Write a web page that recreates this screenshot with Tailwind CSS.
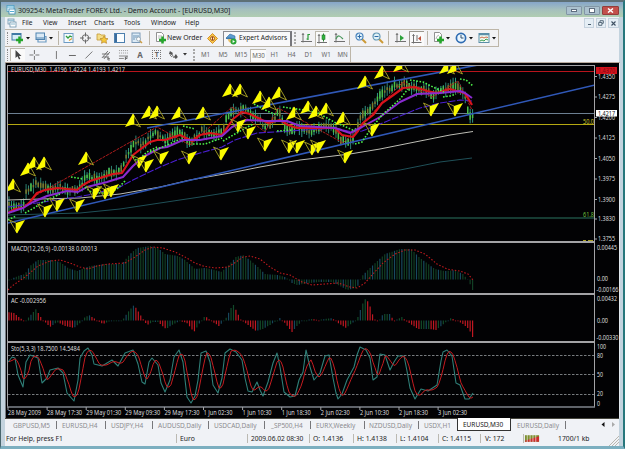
<!DOCTYPE html>
<html lang="en">
<head>
  <meta charset="UTF-8">
  <meta name="viewport" content="width=device-width, initial-scale=1.0">
  <title>309254: MetaTrader FOREX Ltd.</title>
  <script src="https://cdn.jsdelivr.net/npm/@tailwindcss/browser@4"></script>
</head>
<body class="overflow-hidden font-['Noto_Sans',sans-serif] text-[7px] leading-none text-[#1c1c24]">
  <div class="flex flex-col w-[625px] h-[449px] bg-[#c3d3de] border-t-2 border-l border-t-[#5d7076] border-l-[#49666e] border-r-2 border-r-[#27777c] border-b-3 border-b-[#7cafc0] whitespace-nowrap">

    <!-- Title bar -->
    <div class="flex items-center h-[15px] shrink-0 pl-[5px] pr-[4px] bg-linear-to-b from-[#86a6c9] via-[#a5c0bd] to-[#b0cdb1]">
      <svg class="w-[10px] h-[10px]" viewBox="0 0 10 10"><rect x="1" y="0.5" width="7" height="6" fill="#e9f6fb" stroke="#4b9cc3" stroke-width=".8"/><rect x="3" y="4" width="6" height="5" fill="#fff" stroke="#3887b2" stroke-width=".8"/><path d="M1 2h7M4 6.5h4" stroke="#55aed5"/></svg>
      <span class="ml-[2px] mt-[2px] text-[7.1px] w-[215px] tracking-[-0.03px]">309254: MetaTrader FOREX Ltd. - Demo Account - [EURUSD,M30]</span>
      <div class="ml-auto flex gap-[2px] self-start mt-[4px]">
        <div class="flex items-center justify-center w-[16px] h-[9px] bg-[#abc1ce] border border-[#8296a6] rounded-[1px]"><div class="w-[6px] h-[3px] bg-white border border-[#5f6e80]"></div></div>
        <div class="flex items-center justify-center w-[16px] h-[9px] bg-[#abc1ce] border border-[#8296a6] rounded-[1px]"><div class="w-[6px] h-[5px] bg-white border border-[#5f6e80]"></div></div>
        <div class="flex items-center justify-center w-[17px] h-[9px] bg-[#c3504b] border border-[#933d3c] rounded-[1px]"><svg class="w-[7px] h-[5px]" viewBox="0 0 7 5"><path d="M1 .5l5 4M6 .5l-5 4" stroke="#fff" stroke-width="1.5"/></svg></div>
      </div>
    </div>

    <!-- Client area -->
    <div class="flex flex-col grow ml-[4px] mr-[4px] bg-[#f0f2f6]">

      <!-- Menu -->
      <div class="flex items-center h-[12px] shrink-0 text-[7px]">
        <svg class="w-[10px] h-[10px] ml-[2px]" viewBox="0 0 10 10"><rect x="1" y="1" width="6" height="5" fill="#eef7fb" stroke="#7296ad" stroke-width=".8"/><rect x="3" y="4" width="6" height="5" fill="#fff" stroke="#6c93ac" stroke-width=".8"/><path d="M1 2.3h6M4 6h4" stroke="#86b5cd"/></svg>
        <span class="w-[21px] ml-[5px] text-[6.6px]">File</span>
        <span class="w-[25px] text-[6.6px]">View</span>
        <span class="w-[26px] text-[6.6px]">Insert</span>
        <span class="w-[30px] text-[6.6px]">Charts</span>
        <span class="w-[27px] text-[6.6px]">Tools</span>
        <span class="w-[34px] text-[6.6px]">Window</span>
        <span class="text-[6.6px]">Help</span>
        <div class="ml-auto flex gap-[2px]">
          <div class="flex items-end justify-center w-[10px] h-[10px] bg-[#e5eef5] border border-[#c5d2de]"><div class="w-[3px] h-px mb-[2px] bg-[#4b5f71]"></div></div>
          <div class="flex items-center justify-center w-[10px] h-[10px] bg-[#e5eef5] border border-[#c5d2de]"><svg class="w-[6px] h-[6px]" viewBox="0 0 6 6"><path d="M2 2V.7h3.3v2.6H4M.7 2.5h3.2v2.8H.7z" fill="none" stroke="#4b5f71" stroke-width=".9"/></svg></div>
          <div class="flex items-center justify-center w-[11px] h-[10px] bg-[#e5eef5] border border-[#c5d2de]"><svg class="w-[5px] h-[5px]" viewBox="0 0 5 5"><path d="M.5.5l4 4M4.500.500l-4 4" stroke="#3f5163" stroke-width="1.1"/></svg></div>
        </div>
      </div>

      <!-- Standard toolbar -->
      <div class="flex items-center h-[18px] w-[494px] shrink-0 border-t border-r border-b border-[#bdb6a8] bg-[#f2f2f4]">
        <div class="w-px h-[12px] ml-[2px] mr-[3px] border-l border-dotted border-[#8c8c8c]"></div>
        <svg class="w-[13px] h-[12px]" viewBox="0 0 13 12"><rect x="1" y="1.500" width="9" height="6.500" fill="#d6edf8" stroke="#3f7aa5"/><path d="M1 2.500h9" stroke="#3f7aa5"/><path d="M8.500 4.500v7M5 8h7" stroke="#25a52b" stroke-width="2.500"/></svg>
        <svg class="w-[4px] h-[3px] ml-[2px]" viewBox="0 0 4 3"><path d="M0 0h4L2 2.500z" fill="#111"/></svg>
        <svg class="w-[13px] h-[12px] ml-[5px]" viewBox="0 0 13 12"><rect x="1" y="1" width="8.500" height="6.500" fill="#d9e9f6" stroke="#4f83b0"/><path d="M3 8v2h8V4.500h-1" fill="none" stroke="#6c9cc3" stroke-width="1.200"/><path d="M1 6h8" stroke="#4f83b0"/></svg>
        <svg class="w-[4px] h-[3px] ml-[1px]" viewBox="0 0 4 3"><path d="M0 0h4L2 2.500z" fill="#111"/></svg>
        <div class="w-px h-[14px] ml-[5px] bg-[#b9b4a8]"></div>
        <div class="flex ml-px mr-[2px]">
          <svg class="w-[17px] h-[12px]" viewBox="0 0 17 12"><rect x="4" y="1.500" width="9" height="9" fill="#f3fbff" stroke="#6e9cc4"/><path d="M6 4l2 2 2-2 2 1" stroke="#2f9c3b" stroke-width="1.300" fill="none"/><path d="M9 8.500l3-2" stroke="#e09c30" stroke-width="1.300"/></svg>
          <svg class="w-[17px] h-[12px]" viewBox="0 0 17 12"><circle cx="8.500" cy="6" r="3.300" fill="none" stroke="#6b6b6b"/><path d="M8.500.500v4M8.500 7.500v4M3 6h4M10 6h4" stroke="#6b6b6b"/></svg>
          <svg class="w-[17px] h-[12px]" viewBox="0 0 17 12"><path d="M3 2h3l1 1h4v5H3z" fill="#f4dd88" stroke="#c49b35" stroke-width=".800"/><path d="M10 4l1.300 2.400 2.700.300-2 1.900.600 2.700-2.600-1.300-2.500 1.300.500-2.700L6 6.700l2.700-.300z" fill="#f5c93c" stroke="#b98526" stroke-width=".700"/></svg>
          <svg class="w-[17px] h-[12px]" viewBox="0 0 17 12"><rect x="3.500" y="1.500" width="10" height="9" fill="#fafdff" stroke="#4c7fae"/><path d="M5 2v8" stroke="#3a6c9d" stroke-width="2"/></svg>
          <svg class="w-[17px] h-[12px]" viewBox="0 0 17 12"><rect x="4" y="1" width="8" height="9.500" fill="#dcebf6" stroke="#7b9ab8"/><path d="M6 3v5M8 3v3M10 3v3" stroke="#6c93b5"/><circle cx="10.500" cy="7" r="2" fill="#fff" stroke="#8c9faf" stroke-width=".800"/><path d="M12 9l2 2" stroke="#cd9c3e" stroke-width="1.500"/></svg>
        </div>
        <div class="w-px h-[14px] ml-[2px] bg-[#b9b4a8]"></div>
        <svg class="w-[12px] h-[12px] ml-[5px]" viewBox="0 0 12 12"><path d="M1.500.500h5l2 2v7h-7z" fill="#fff" stroke="#777" stroke-width=".800"/><path d="M3 4h4M3 6h3" stroke="#999" stroke-width=".700"/><path d="M7.500 4.500v7M4 8h7" stroke="#25a52b" stroke-width="2.500"/></svg>
        <span class="w-[40px] text-[6.9px]">New Order</span>
        <svg class="w-[11px] h-[11px]" viewBox="0 0 11 11"><path d="M5.500.500l5 5-5 5-5-5z" fill="#f8c64a" stroke="#d18a1e" stroke-width=".900"/><circle cx="5.500" cy="5.500" r="2" fill="#fff1c0" stroke="#9d4f14" stroke-width=".900"/><path d="M5.500 4v3" stroke="#a43d10"/></svg>
        <div class="flex items-center w-[69px] h-[15px] ml-[5px] pl-[1px] border-t border-l border-[#8b8b90] border-r-2 border-r-[#77777c] bg-[#f8f8fa]">
          <svg class="w-[12px] h-[12px]" viewBox="0 0 12 12"><path d="M1 5l4-4 5 2 0 3-5 1z" fill="#5b9bd0" stroke="#346c9c" stroke-width=".600"/><path d="M3 6c0 5 6 5 6 0z" fill="#e7c16f"/><path d="M1 5.500c3-1 6 0 8 1" stroke="#3c76a8" stroke-width="1.300" fill="none"/><circle cx="8.500" cy="8.500" r="3" fill="#2aa637"/><path d="M7.600 7l2.400 1.500L7.600 10z" fill="#fff"/></svg>
          <span class="ml-[2px] text-[6.600px]">Expert Advisors</span>
        </div>
        <div class="w-px h-[12px] ml-[2px] border-l-2 border-dotted border-[#a8a8a8]"></div>
        <svg class="w-[17px] h-[12px] ml-[2px]" viewBox="0 0 17 12"><path d="M5 1.500v9M3 9.500h11M4 3l1-1.500L6 3" fill="none" stroke="#707070"/><path d="M10 2v6M10 2.500h2M8.500 7H10" stroke="#2b9c38" stroke-width="1.200"/></svg>
        <div class="w-[14px] h-[15px] flex items-center border-t border-l border-[#bdb9ae] bg-[#fafafa]"><svg class="w-[13px] h-[12px]" viewBox="0 0 13 12"><path d="M3 1.500v9M1 9.500h10M2 3l1-1.500L4 3" fill="none" stroke="#707070"/><path d="M7.500.500v8" stroke="#257a2e"/><rect x="6" y="2" width="3" height="4.500" fill="#30b33c" stroke="#257a2e" stroke-width=".600"/></svg></div>
        <svg class="w-[17px] h-[12px] ml-[2px]" viewBox="0 0 17 12"><path d="M5 1.500v9M3 9.500h11M4 3l1-1.500L6 3" fill="none" stroke="#707070"/><path d="M5 7c2-5 4-3 7 0" fill="none" stroke="#48965a" stroke-width="1.200"/></svg>
        <div class="w-px h-[14px] ml-[1px] bg-[#b9b4a8]"></div>
        <svg class="w-[17px] h-[12px] ml-[2px]" viewBox="0 0 17 12"><path d="M10 7l4 4" stroke="#cc9a35" stroke-width="2"/><circle cx="7.500" cy="4.500" r="3.500" fill="#e0f2fb" stroke="#4a83bc" stroke-width="1.200"/><path d="M5.500 4.500h4M7.500 2.500v4" stroke="#2e6aa8"/></svg>
        <svg class="w-[17px] h-[12px]" viewBox="0 0 17 12"><path d="M10 7l4 4" stroke="#cc9a35" stroke-width="2"/><circle cx="7.500" cy="4.500" r="3.500" fill="#e0f2f6" stroke="#6398b5" stroke-width="1.200"/><path d="M5.500 4.500h4" stroke="#2e6aa8"/></svg>
        <div class="w-px h-[14px] ml-[2px] bg-[#b9b4a8]"></div>
        <svg class="w-[17px] h-[12px] ml-[3px]" viewBox="0 0 17 12"><path d="M5 1.500v9M3 9.500h11M4 3l1-1.500L6 3" fill="none" stroke="#707070"/><path d="M8 3l4 3-4 3z" fill="#2ba13a"/></svg>
        <div class="w-[15px] h-[15px] flex items-center border-t border-l border-[#9b9890] bg-[#fafafa]"><svg class="w-[13px] h-[12px]" viewBox="0 0 13 12"><path d="M3.500 1.500v9M1.500 9.500h10M2.500 3l1-1.500 1 1.500M7 2v6" fill="none" stroke="#707070"/><path d="M11 3L8 5.500 11 8z" fill="#c0503a"/></svg></div>
        <div class="w-px h-[14px] ml-[3px] bg-[#b9b4a8]"></div>
        <svg class="w-[12px] h-[12px] ml-[5px]" viewBox="0 0 12 12"><path d="M1.500.500h5l2 2v7h-7z" fill="#fff" stroke="#777" stroke-width=".800"/><path d="M3 7c1-4 2-3 3-4" stroke="#888" stroke-width=".700" fill="none"/><path d="M7.500 4.500v7M4 8h7" stroke="#25a52b" stroke-width="2.500"/></svg>
        <svg class="w-[4px] h-[3px] ml-[1px]" viewBox="0 0 4 3"><path d="M0 0h4L2 2.500z" fill="#111"/></svg>
        <svg class="w-[12px] h-[12px] ml-[5px]" viewBox="0 0 12 12"><circle cx="6" cy="6" r="4.600" fill="#eaf6ff" stroke="#2f6cb2" stroke-width="1.700"/><path d="M6 3v3h2.500" fill="none" stroke="#35506d"/></svg>
        <svg class="w-[4px] h-[3px] ml-[2px]" viewBox="0 0 4 3"><path d="M0 0h4L2 2.500z" fill="#111"/></svg>
        <svg class="w-[12px] h-[12px] ml-[5px]" viewBox="0 0 12 12"><rect x="1" y="1.500" width="10" height="9" fill="#f0fbf3" stroke="#5b8fa8"/><path d="M1 2.500h10" stroke="#5b8fa8" stroke-width="1.500"/><path d="M2 6l2-1 2 1 2-1 2 .500" stroke="#ce6b4a" fill="none"/><path d="M2 9l2-1 2 1 2-2 2 1" stroke="#3c9d52" fill="none"/></svg>
        <svg class="w-[4px] h-[3px] ml-[2px]" viewBox="0 0 4 3"><path d="M0 0h4L2 2.500z" fill="#111"/></svg>
      </div>

      <!-- Line studies and periods -->
      <div class="flex items-center h-[15px] w-[346px] shrink-0 border-r border-[#bdb6a8] text-[#666]">
        <div class="w-px h-[12px] ml-[2px] mr-[2px] border-l border-dotted border-[#8c8c8c]"></div>
        <div class="flex items-center justify-center w-[15px] h-[13px] border-t border-l border-[#bdb9ae] bg-[#fafafa]"><svg class="w-[8px] h-[10px]" viewBox="0 0 8 10"><path d="M1.500 0v8l2-1.700L5 9.500l1.300-.700L5 6h2.500z" fill="#444"/></svg></div>
        <svg class="w-[17px] h-[12px] ml-[1px]" viewBox="0 0 17 12"><path d="M8.500 1v4M8.500 7v4M3.500 6h4M9.500 6h4" stroke="#777"/></svg>
        <div class="w-[5px]"></div>
        <svg class="w-[17px] h-[12px]" viewBox="0 0 17 12"><path d="M8.500 2v8" stroke="#777"/></svg>
        <svg class="w-[17px] h-[12px]" viewBox="0 0 17 12"><path d="M5 6.500h7" stroke="#666"/></svg>
        <svg class="w-[17px] h-[12px]" viewBox="0 0 17 12"><path d="M4.500 9.500l7-7" stroke="#777"/></svg>
        <svg class="w-[17px] h-[12px]" viewBox="0 0 17 12"><path d="M4 9l6-7M6 10l6-7M4 5h7M5 8h6M10 8v3h2M10 9.500h2" stroke="#666" stroke-width=".900" fill="none"/></svg>
        <svg class="w-[17px] h-[12px]" viewBox="0 0 17 12"><path d="M4 1.500h9M4 4h9" stroke="#999" stroke-dasharray="1 1"/><path d="M4 7h9M4 9.500h5" stroke="#888"/><path d="M10.500 11V8h2.500M10.500 9.500h2" stroke="#666" fill="none"/></svg>
        <span class="w-[17px] pt-px text-center text-[8px] font-bold text-[#666]">A</span>
        <div class="w-[17px] flex justify-center"><div class="w-[9px] h-[9px] flex items-center justify-center border border-dotted border-[#777] text-[7px] font-bold">T</div></div>
        <svg class="w-[17px] h-[12px]" viewBox="0 0 17 12"><path d="M5 2l3 2-1 2-3-1zM11 5l2 3-2 2-2-2z" fill="#555"/><path d="M7 5l2 4M5 6l2 2" stroke="#777"/></svg>
        <svg class="w-[4px] h-[3px] ml-[1px]" viewBox="0 0 4 3"><path d="M0 0h4L2 2.500z" fill="#333"/></svg>
        <div class="w-px h-[12px] ml-[6px] mr-[2px] border-l-2 border-dotted border-[#a8a8a8]"></div>
        <div class="flex items-center pt-px text-center text-[6.200px]">
          <span class="w-[17px]">M1</span>
          <span class="w-[18px]">M5</span>
          <span class="w-[18px]">M15</span>
          <span class="w-[16px] h-[13px] leading-[12px] border-t border-l border-[#bdb9ae] bg-[#fafafa]">M30</span>
          <span class="w-[17px]">H1</span>
          <span class="w-[17px]">H4</span>
          <span class="w-[17px]">D1</span>
          <span class="w-[18px]">W1</span>
          <span class="w-[15px]">MN</span>
        </div>
      </div>

      <!-- Chart window: one unit is one pixel -->
      <svg id="chart" class="block w-[615px] h-[356px] shrink-0" viewBox="5 62 615 356" font-family="'Noto Sans', sans-serif" font-size="6.2" fill="none">
        <rect x="5" y="62" width="615" height="356" fill="#020204"/>
        <path d="M5 62.500h615" stroke="#b7a99c"/>
        <path d="M5.500 63v355" stroke="#777d84"/>
        <path d="M619.500 63v355" stroke="#dfe6ec"/>
        <clipPath id="plot"><rect x="8" y="66" width="586" height="175"/></clipPath>
        <g id="price" clip-path="url(#plot)"></g>
        <g id="panes"></g>
        <g stroke="#a3a3a6">
          <path d="M7.500 65v342M594.500 65v342M7 65.500h588"/>
          <path d="M7 242h588M7 294h588M7 342h588" stroke-width="2"/>
          <path d="M7 407h588" stroke="#7f858c" stroke-width="1.500"/>
        </g>
        <g id="labels"></g>
      </svg>

      <!-- Chart tabs -->
      <div class="flex h-[13px] shrink-0 border-t border-[#44443c] text-[6.500px] leading-[13px] text-[#8c8c90]">
        <span class="w-[51px] pl-[8px]">GBPUSD,M5</span>
        <span class="w-[49px] my-[2px] leading-[9px] pl-[5px] border-l border-[#77777a]">EURUSD,H4</span>
        <span class="w-[47px] my-[2px] leading-[9px] pl-[5px] border-l border-[#77777a]">USDJPY,H4</span>
        <span class="w-[56px] my-[2px] leading-[9px] pl-[5px] border-l border-[#77777a]">AUDUSD,Daily</span>
        <span class="w-[56px] my-[2px] leading-[9px] pl-[5px] border-l border-[#77777a]">USDCAD,Daily</span>
        <span class="w-[46px] my-[2px] leading-[9px] pl-[6px] border-l border-[#77777a]">_SP500,H4</span>
        <span class="w-[54px] my-[2px] leading-[9px] pl-[5px] border-l border-[#77777a]">EURX,Weekly</span>
        <span class="w-[54px] my-[2px] leading-[9px] pl-[4px] border-l border-[#77777a]">NZDUSD,Daily</span>
        <span class="w-[39px] my-[2px] leading-[9px] pl-[5px] border-l border-[#77777a]">USDX,H1</span>
        <span class="w-[54px] h-[13px] -mt-px pl-[5px] leading-[14px] bg-white border-x border-b border-[#333] text-[#222]">EURUSD,M30</span>
        <span class="w-[55px] my-[2px] leading-[9px] pl-[6px] border-r border-[#77777a]">EURUSD,Daily</span>
        <svg class="w-[16px] h-[5px] ml-auto mr-[2px] mt-[3px]" viewBox="0 0 16 5"><path d="M3.500 0v5L0.500 2.500z" fill="#111"/><path d="M11 0v5l3-2.500z" fill="#aaa"/></svg>
      </div>

      <!-- Status bar -->
      <div class="flex items-center grow text-[6.800px]">
        <span class="w-[171px] h-[9px] leading-[10px] pl-[1px]">For Help, press F1</span>
        <span class="w-[71px] h-[9px] leading-[10px] pl-[3px] border-l border-[#bbb9b2]">Euro</span>
        <span class="w-[62px] h-[9px] leading-[10px] pl-[3px] border-l border-[#bbb9b2] text-[6.600px]">2009.06.02 08:30</span>
        <span class="w-[44px] h-[9px] leading-[10px] pl-[3px] border-l border-[#bbb9b2]">O: 1.4136</span>
        <span class="w-[43px] h-[9px] leading-[10px] pl-[3px] border-l border-[#bbb9b2]">H: 1.4138</span>
        <span class="w-[42px] h-[9px] leading-[10px] pl-[3px] border-l border-[#bbb9b2]">L: 1.4104</span>
        <span class="w-[42px] h-[9px] leading-[10px] pl-[3px] border-l border-[#bbb9b2]">C: 1.4115</span>
        <span class="w-[43px] h-[9px] leading-[10px] pl-[4px] border-l border-[#bbb9b2]">V: 172</span>
        <svg class="w-[17px] h-[9px] border-l border-[#bbb9b2]" viewBox="0 0 17 9"><path d="M1 1h15v7H1z" fill="#7d8f2e"/><path d="M1 8V7l15-5v6z" fill="#cc2e2c"/><path d="M3.500 0v9M6.500 0v9M9.500 0v9M12.500 0v9" stroke="#f0f2f6" stroke-width=".700"/></svg>
        <span class="ml-[18px] h-[9px] leading-[10px]">1700/1 kb</span>
        <svg class="w-[11px] h-[11px] ml-auto self-end" viewBox="0 0 11 11"><path d="M1 11L11 1M4 11l7-7M7 11l4-4" stroke="#b9b7b0"/></svg>
      </div>
    </div>
  </div>

  <script>
    var STEP = 2.44, BARS = 191;
    var $ = function(id){ return document.getElementById(id); };

    function add(parent, tag, attrs, text){
      var el = document.createElementNS('http://www.w3.org/2000/svg', tag);
      for (var k in attrs) el.setAttribute(k, attrs[k]);
      if (text) el.textContent = text;
      $(parent).appendChild(el);
      return el;
    }
    // "x,y x,y" -> [[x,y], ...]
    function pts(s){
      return s.split(' ').map(function(p){ return p.split(',').map(Number); });
    }
    function at(list, x){
      if (x <= list[0][0]) return list[0][1];
      for (var i = 1; i < list.length; i++){
        if (x <= list[i][0]){
          var a = list[i-1], b = list[i];
          return a[1] + (b[1]-a[1]) * (x-a[0]) / (b[0]-a[0]);
        }
      }
      return list[list.length-1][1];
    }
    function line(parent, s, color, width, dash){
      add(parent, 'polyline', {points: s, stroke: color, 'stroke-width': width || 1, 'stroke-dasharray': dash || 'none', 'stroke-linejoin': 'round'});
    }
    function label(x, y, text, len, color){
      add('labels', 'text', {x: x, y: y, textLength: len, lengthAdjust: 'spacingAndGlyphs', fill: color || '#dcdcdc'}, text);
    }
    var seed = 7;
    function rnd(){ seed = (seed * 16807) % 2147483647; return seed / 2147483647; }

    // Levels
    line('price', '8,71.5 594,71.5', '#b8141c', 1);
    line('price', '8,113.5 594,113.5', '#6c7f92', 1);
    line('price', '8,124.500 594,124.500', '#b5a812', 1.2);
    line('price', '8,218 594,218', '#2b7560', 1.2);

    // Candles
    var price = pts('8,206 20,205 24,203 26,190 32,187 36,182 45,187 52,188 60,187 72,191 80,187 86,177 95,179 105,174 120,171 126,158 134,141 142,146 150,136 155,133 165,140 178,131 190,142 202,131 212,133 222,133 226,118 231,111 242,108 252,115 260,118 264,129 270,124 279,112 285,126 290,130 297,127 310,131 325,127 335,129 342,141 352,141 357,126 362,113 370,112 380,95 388,90 397,84 405,84 412,88 425,90 433,95 440,92 452,86 458,87 465,95 469,115 473,118');
    for (var i = 0; i < BARS; i++){
      var x = 9 + i * STEP, y = at(price, x) + (rnd() - .5) * 4;
      var wick = 3 + rnd() * 5, body = 1 + rnd() * 3;
      var up = rnd() > .5;
      line('price', x + ',' + (y - wick) + ' ' + x + ',' + (y + wick), up ? '#2f9a86' : '#2d8273', 1);
      line('price', x + ',' + (y - body) + ' ' + x + ',' + (y + body), up ? '#4bc048' : '#7d7a2c', 1.5);
    }

    // Zigzag and moving averages
    line('price', '33,197 157,127 190,145 232,107 265,132 278,108 307,123 343,143 403,82 432,97 458,81 472,110', '#b01c1c', 1, '3 1');
    line('price', '8,215 80,213 120,209 160,203 200,197 250,189 300,182 350,177 400,170 440,162 472,158', '#1f5058', 1);
    line('price', '8,200 40,199 80,198 120,194 160,187 190,180 230,173 260,167 300,160 350,154 380,149 420,141 450,135 473,131.500', '#bdbdb5', 1);
    line('price', '8,207 30,204 77,197 93,194 120,187 135,179 160,167 177,160 200,153 222,147 235,140 257,133 290,131 335,128 352,132 362,131 380,124 400,116 420,108 440,103 460,100 472,101', '#4a1fd0', 1.1, '7 1.5');
    line('price', '8,223 594,85.300', '#3058b8', 1.6);
    line('price', '147,128 478,65', '#3058b8', 1.6);
    line('price', '8,213 15,209 23,208 30,202 37,193 45,190 58,188 68,189 77,190 83,185 90,181 100,178 113,174 122,173 127,165 133,155 142,148 150,142 157,140 165,140 180,135 192,141 200,135 210,133 222,135 227,128 233,119 242,112 250,114 260,119 268,123 280,120 288,125 297,128 320,128 335,128 342,135 353,137 358,131 363,123 373,115 382,103 392,96 403,88 415,87 427,91 437,93 450,89 460,92 465,93 472,105', '#d8131c', 2.2);
    line('price', '8,213 23,208 33,202 47,196 67,191 78,192 87,187 107,182 123,177 133,166 143,157 160,148 167,147 183,140 200,140 222,136 232,127 247,120 267,121 287,121 300,126 335,128 350,133 362,127 380,117 400,102 417,94 440,93 460,91 465,93 472,98', '#8a2bd0', 2);

    // Parabolic SAR
    ['8,220 16,216', '25,213 34,208 43,202 60,194', '71,177 83,179', '85,187 92,193 108,193 117,189 126,180', '133,157 137,161 147,152 157,147', '150,152 165,146 180,139',
     '183,126 195,129', '193,144 205,144 222,138', '223,141 235,134 253,124', '254,104 267,111 277,115', '277,131 293,130',
     '283,107 310,111 318,113 336,123', '337,123 355,131', '355,144 362,142 370,130 382,115 400,99 408,89',
     '410,80 423,82 433,87 444,92', '443,97 450,96 456,94', '460,79 466,80 473,86'
    ].forEach(function(s){
      add('price', 'polyline', {points: s, stroke: '#4df04a', 'stroke-width': 1.6, 'stroke-dasharray': '1.6 1.6'});
    });

    // Fractal arrows, placed by their tips
    function arrow(x, y, turn){
      var t = 'translate(' + x + ' ' + y + ') rotate(' + turn + ')';
      add('price', 'path', {d: 'M0 0L7.500 13L1 10z', transform: t, stroke: '#9c9622', 'stroke-width': 1});
      add('price', 'path', {d: 'M0-.500L-8 13L1 10L1.500 2z', transform: t, fill: '#fbfb00'});
    }
    pts('13,179 28,163 34,157 44,157 86,152 133,114 149,106 157,106 179,107 203,107 230,84 240,84 260,91 269,97 279,87 294,107 308,101 316,106 326,103 343,112 365,76 382,66 401,59 447,61 455,61').forEach(function(p){ arrow(p[0], p[1], 0); });
    pts('17,233 45,217 57,211 77,212 94,199 105,199 111,197 139,168 146,172 161,164 189,164 221,160 238,132 248,139 265,151 289,153 297,153 312,155 318,153 345,163 372,136 431,116 455,116').forEach(function(p){ arrow(p[0], p[1], 180); });

    // MACD
    var macd = pts('8,281 13,278 18,276 25,274 30,266 38,260 50,260 60,262 68,268 77,271 90,266 105,264 122,264 130,254 137,248 150,246 158,248 165,254 178,256 185,260 195,269 205,268 215,270 221,272 228,266 236,257 243,255 250,260 258,267 265,274 278,275 285,277 288,279 292,283 297,285 310,283 320,282 332,282 340,286 347,290 357,288 362,276 372,266 385,254 400,249 411,249 420,258 435,269 445,271 455,270 463,274 468,280 471,286 473,291');
    // Accelerator: falling bars are red
    var ac = pts('8,312 14,313 20,318 25,321 29,317 36,309 40,316 44,321 50,327 57,322 65,326 74,328 80,323 84,318 89,315 95,319 103,324 110,321 122,321 128,312 134,305 138,311 143,319 147,325 153,322 158,322 166,329 172,325 180,321 187,323 194,332 199,324 205,316 210,320 219,326 225,320 229,312 233,304 236,310 241,320 248,325 256,331 263,329 270,325 276,321 280,318 285,323 292,332 297,326 302,321 312,319 318,320 325,319 332,318 338,323 346,328 351,324 355,321 358,317 362,305 366,298 370,306 374,319 379,321 383,314 390,314 394,321 402,317 406,321 412,325 418,329 430,329 436,330 445,323 450,318 456,320 463,324 469,329 473,338');
    for (i = 0; i < BARS; i++){
      x = 9 + i * STEP;
      line('panes', x + ',279.500 ' + x + ',' + at(macd, x), i % 3 == 2 ? '#184a60' : '#123f24', 1.2);
      var v = at(ac, x), falling = v > at(ac, x - STEP) + .05;
      line('panes', x + ',320.500 ' + x + ',' + (Math.abs(v - 320.5) < .7 ? 321.3 : v), falling || i < 4 ? '#c01822' : (i % 3 ? '#124a2a' : '#17465c'), 1.2);
    }
    line('panes', '8,290 12,286 25,277 38,266 50,261 60,260 70,263 80,267 88,269 97,266 108,264 125,263 135,257 145,250 153,247 163,248 175,252 185,257 195,263 203,266 215,268 228,267 236,262 243,257 250,256 260,259 270,267 280,273 290,275 302,282 312,285 338,283 350,287 357,288 365,283 372,275 383,263 395,254 405,250 415,250 425,254 437,264 447,269 460,271 468,274 473,280', '#c01a1e', 1.1, '1.5 1.8');

    // Stochastic
    [355.5, 374.5, 394.5].forEach(function(y){ line('panes', '8,' + y + ' 594,' + y, '#85898c', .9, '2.500 1.500'); });
    var sto = '8,362 12,357 15,358 18,375 23,387 26,362 30,355 38,358 42,383 47,378 50,370 58,368 63,373 67,393 74,401 78,380 80,358 84,351 88,348 92,355 94,364 102,366 112,360 118,366 125,353 133,350 138,364 142,382 145,384 149,362 152,358 158,365 161,383 165,392 170,380 174,357 179,350 183,362 187,397 191,403 195,396 198,380 201,353 206,351 210,362 213,385 218,393 222,378 225,353 230,349 236,352 242,360 245,378 248,391 252,392 257,382 260,390 263,396 268,382 273,363 277,353 280,367 284,392 290,397 295,396 299,380 303,372 306,350 310,367 314,380 320,373 325,356 329,355 333,378 336,393 338,399 342,394 347,380 354,367 357,355 360,347 366,350 370,358 373,380 377,377 380,354 385,355 390,370 394,362 398,356 404,356 407,371 410,388 415,399 421,389 428,391 437,385 441,361 443,352 447,350 452,356 456,383 460,385 465,399 469,399 473,393';
    var main = pts(sto), signal = [];
    for (x = 9; x <= 473; x += 2){
      signal.push(x + ',' + (at(main, x) + at(main, x - 2.4) + at(main, x - 4.8) + at(main, x - 6)) / 4);
    }
    line('panes', sto, '#2f7f78', 1.1);
    line('panes', signal.join(' '), '#c41c20', 1);

    // Captions
    label(11, 72, 'EURUSD,M30\u00a0 1.4196 1.4224 1.4193 1.4217', 114);
    label(11, 251, 'MACD(12,26,9) -0.00138 0.00013', 86);
    label(11, 303, 'AC -0.002956', 35);
    label(11, 351, 'Sto(5,3,3) 18.7500 14.5484', 69);
    label(583, 123.5, '50.0', 11, '#c9c22c');
    label(583, 217, '61.8', 11, '#6bbf3a');
    add('labels', 'path', {d: 'M583 240.500h3M588 240.500h5', stroke: '#a8a020'});

    // Price scale
    [['1.4350', 76.5], ['1.4275', 97], ['1.4200', 117.5], ['1.4125', 138], ['1.4050', 158.5], ['1.3975', 179], ['1.3900', 199.5], ['1.3830', 219], ['1.3755', 239]].forEach(function(r){
      line('labels', '595,' + r[1] + ' 597,' + r[1], '#a3a3a6');
      label(598, r[1] + 2.3, r[0], 17);
    });
    add('labels', 'rect', {x: 596, y: 67, width: 21, height: 7, fill: '#d3121c'});
    label(598, 72.8, '1.4370', 17, '#7c0c12');
    add('labels', 'rect', {x: 596, y: 110, width: 21, height: 6.5, fill: '#fff'});
    label(598, 115.700, '1.4217', 17, '#111');
    [['0.00445', 249.5, 20], ['0.00', 281, 11], ['-0.00166', 291.500, 22], ['0.00432', 301, 20], ['0.00', 323, 11], ['-0.00330', 339.500, 22], ['100', 349, 9], ['80', 358, 6], ['50', 377, 6], ['20', 396, 6], ['0', 405.500, 3]].forEach(function(r){
      label(r[2] == 22 ? 596.5 : 597, r[1], r[0], r[2]);
    });

    // Time scale
    ['28 May 2009', '28 May 17:30', '29 May 01:30', '29 May 09:30', '29 May 17:30', '1 Jun 02:30', '1 Jun 10:30', '1 Jun 18:30', '2 Jun 02:30', '2 Jun 10:30', '2 Jun 18:30', '3 Jun 02:30'].forEach(function(t, n){
      var tx = 8 + n * 39.1;
      line('labels', tx + ',407 ' + tx + ',410', '#a3a3a6');
      label(tx, 415, t, n == 0 ? 33 : n < 5 ? 35 : 29);
    });
  </script>
</body>
</html>
